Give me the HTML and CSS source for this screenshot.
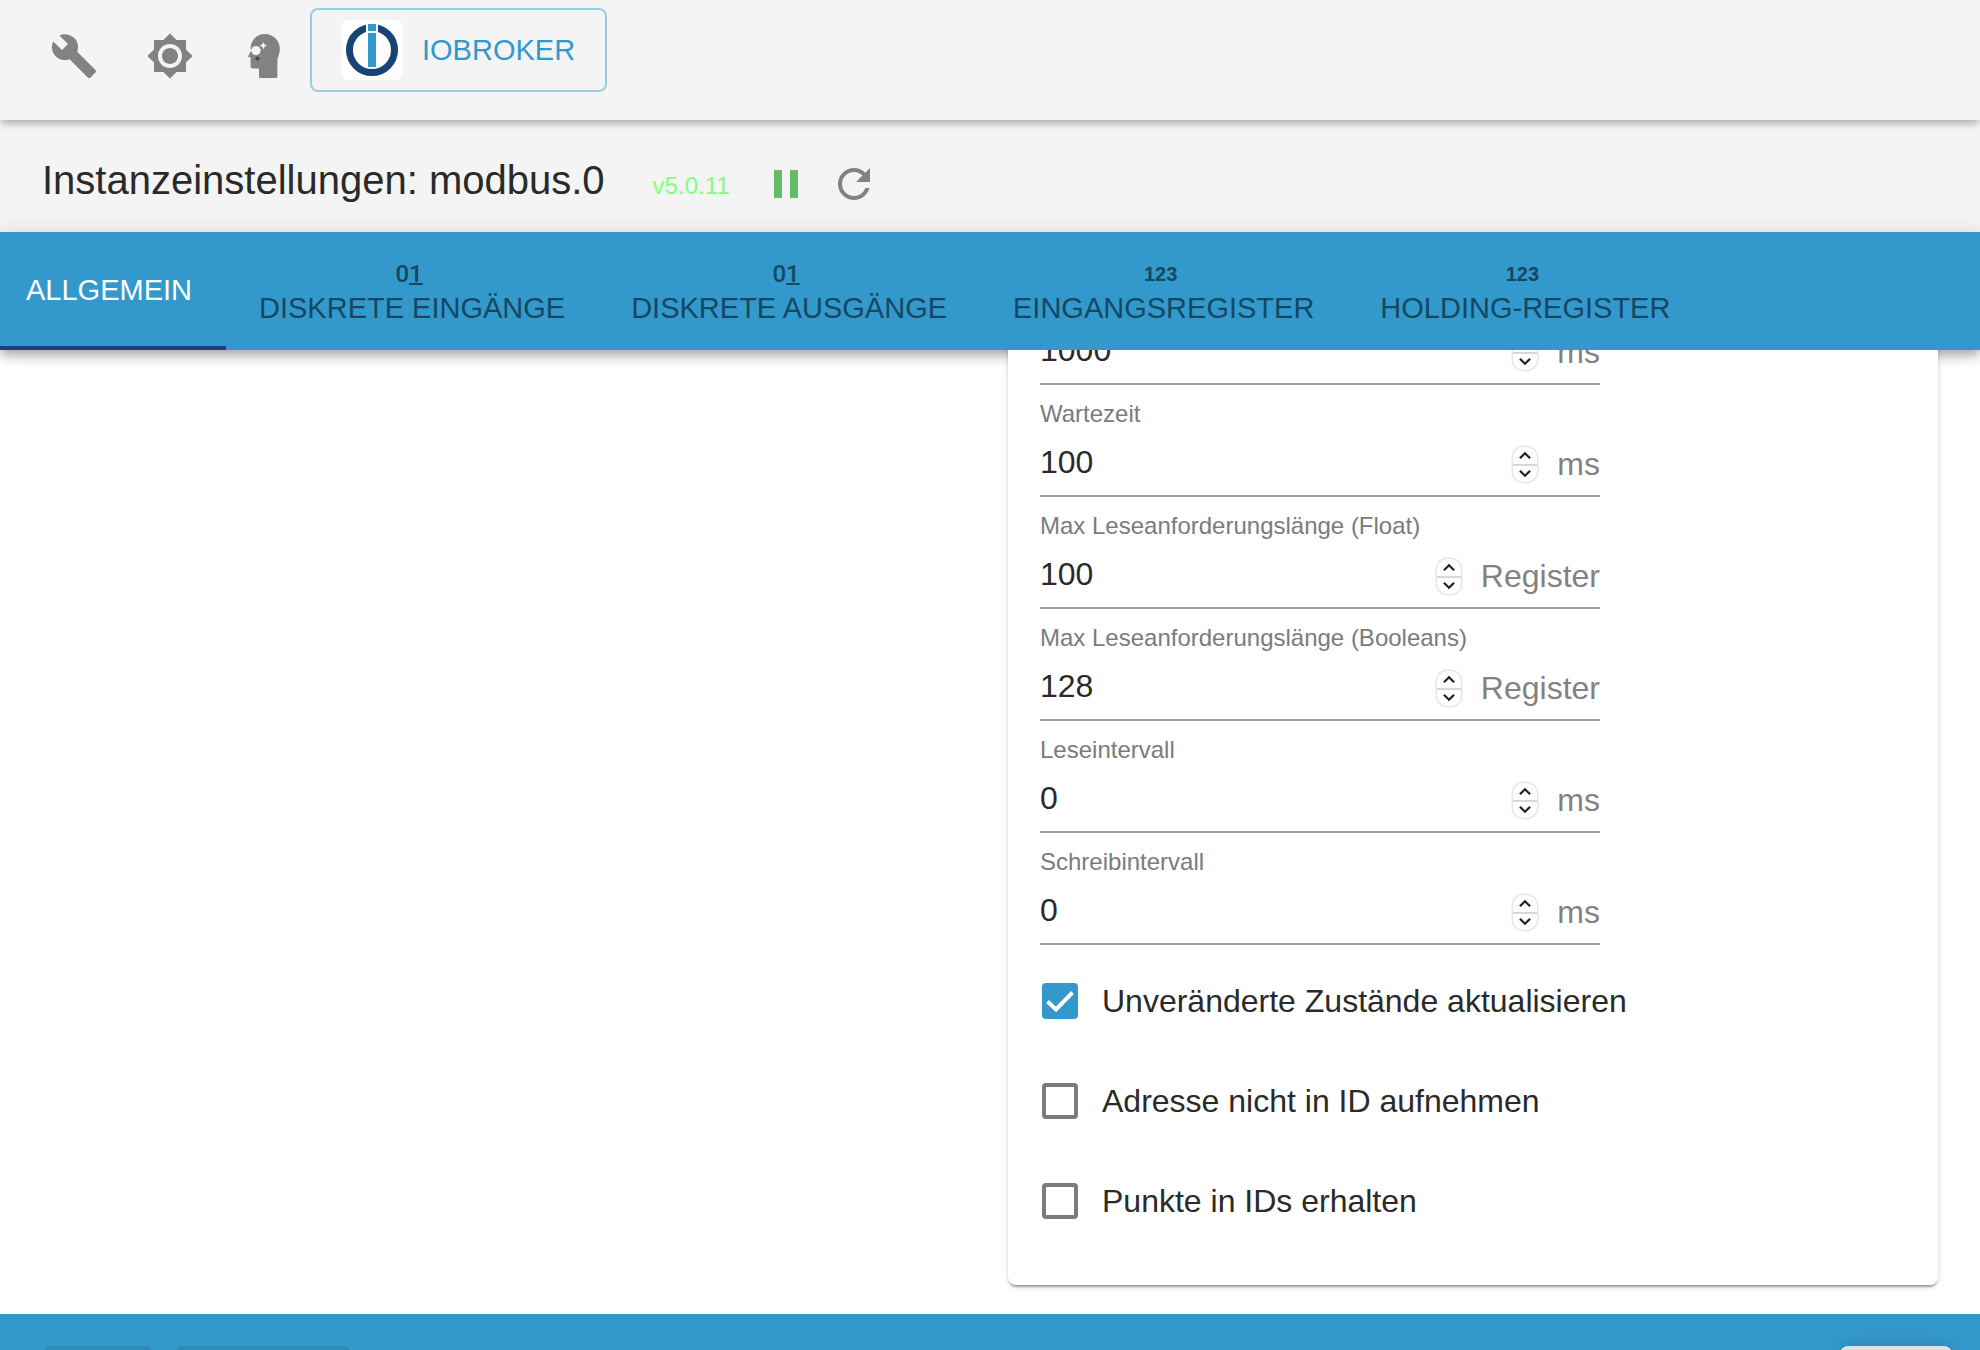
FILE: index.html
```html
<!DOCTYPE html>
<html lang="de">
<head>
<meta charset="utf-8">
<meta name="viewport" content="width=device-width, initial-scale=1">
<title>Instanzeinstellungen: modbus.0</title>
<link rel="stylesheet" href="styles.css">
</head>
<body>
<svg class="sprites" aria-hidden="true">
  <symbol id="up" viewBox="0 0 12 8"><path d="M1.500 6.500L6 2l4.500 4.500"/></symbol>
  <symbol id="down" viewBox="0 0 12 8"><path d="M1.500 1.500L6 6l4.500-4.500"/></symbol>
</svg>
<header class="appbar">
  <div class="tools">
    <button class="icon-button" aria-label="Einstellungen"><svg class="icon" viewBox="0 0 24 24"><path d="M22.700 19l-9.100-9.100c.9-2.300.4-5-1.500-6.900-2-2-5-2.400-7.400-1.300L9 6 6 9 1.600 4.700C.4 7.100.9 10.100 2.900 12.100c1.900 1.900 4.600 2.400 6.900 1.500l9.100 9.100c.4.4 1 .4 1.400 0l2.300-2.300c.5-.4.5-1.100.1-1.400z"/></svg></button>
    <button class="icon-button" aria-label="Farbschema"><svg class="icon" viewBox="0 0 24 24"><path d="M20 8.690V4h-4.690L12 .69 8.690 4H4v4.690L.69 12 4 15.310V20h4.690L12 23.310 15.310 20H20v-4.690L23.310 12 20 8.690zM12 18c-3.310 0-6-2.690-6-6s2.690-6 6-6 6 2.690 6 6-2.690 6-6 6zm0-10c-2.210 0-4 1.790-4 4s1.790 4 4 4 4-1.790 4-4-1.790-4-4-4z"/></svg></button>
    <button class="icon-button" aria-label="Expertenmodus"><svg class="icon" viewBox="0 0 24 24"><path d="M11.500 1C7.500 1 4.400 4 4.300 8v1.700L3.100 12.100c-.1.300.1.500.4.500h.8v4.700c0 .6.400.9.900.9h3.300v4c0 .5.300.8.800.8H17c.4 0 .7-.3.700-.7V13.500c.7-1.500 1.200-3.200 1.200-5.200C18.900 4.200 15.600 1 11.500 1z"/><circle cx="7" cy="9.300" r="2.300" fill="#f4f4f4"/><path d="M3.500 9.200h2" stroke="#f4f4f4"/><path d="M10.700 5.300l.4 1.100 1.100.4-1.100.4-.4 1.100-.4-1.100-1.100-.4 1.100-.4z" fill="#fff" stroke="#fff" stroke-width=".3"/><circle cx="7.700" cy="13.200" r="1" fill="#444"/></svg></button>
  </div>
  <button class="host-button">
    <svg class="logo" viewBox="0 0 60 60" aria-hidden="true"><rect width="60" height="60" rx="6" fill="#fff"/><circle cx="30" cy="30" r="22.500" fill="none" stroke="#174475" stroke-width="7"/><path d="M24 3h12v12H24zM25 40h10v7H25z" fill="#fff"/><path d="M26 4h8v7h-8zM26 13h8v34h-8z" fill="#3399cc"/></svg>
    <span>IOBROKER</span>
  </button>
</header>
<main class="settings">
  <div class="titlebar">
    <h1 class="title">Instanzeinstellungen: modbus.0</h1>
    <span class="version">v5.0.11</span>
    <button class="icon-button pause" aria-label="Pause"><svg class="icon" viewBox="0 0 24 24"><path d="M6 19h4V5H6zM14 5v14h4V5z"/></svg></button>
    <button class="icon-button" aria-label="Neu starten"><svg class="icon" viewBox="0 0 24 24"><path d="M17.650 6.350C16.200 4.900 14.210 4 12 4c-4.420 0-7.990 3.580-7.990 8s3.570 8 7.990 8c3.730 0 6.840-2.550 7.730-6h-2.080c-.82 2.330-3.040 4-5.650 4-3.310 0-6-2.690-6-6s2.690-6 6-6c1.660 0 3.140.69 4.220 1.780L13 11h7V4l-2.350 2.350z"/></svg></button>
  </div>
  <nav class="tabs" role="tablist">
    <button class="tab tab-active" role="tab" aria-selected="true">ALLGEMEIN</button>
    <button class="tab" role="tab"><span class="digits">0<u>1</u></span>DISKRETE EINGÄNGE</button>
    <button class="tab" role="tab"><span class="digits">0<u>1</u></span>DISKRETE AUSGÄNGE</button>
    <button class="tab" role="tab"><span class="digits digits-bold">123</span>EINGANGSREGISTER</button>
    <button class="tab" role="tab"><span class="digits digits-bold">123</span>HOLDING-REGISTER</button>
  </nav>
  <div class="content">
    <form class="card">
      <div class="field">
        <label class="label" for="timeout">Timeout</label>
        <div class="control"><input class="value" id="timeout" type="number" value="1000"><span class="spinner"><button type="button" aria-label="Erhöhen"><svg class="arrow"><use href="#up"/></svg></button><button type="button" aria-label="Verringern"><svg class="arrow"><use href="#down"/></svg></button></span><span class="unit">ms</span></div>
      </div>
      <div class="field">
        <label class="label" for="wait">Wartezeit</label>
        <div class="control"><input class="value" id="wait" type="number" value="100"><span class="spinner"><button type="button" aria-label="Erhöhen"><svg class="arrow"><use href="#up"/></svg></button><button type="button" aria-label="Verringern"><svg class="arrow"><use href="#down"/></svg></button></span><span class="unit">ms</span></div>
      </div>
      <div class="field">
        <label class="label" for="floats">Max Leseanforderungslänge (Float)</label>
        <div class="control"><input class="value" id="floats" type="number" value="100"><span class="spinner"><button type="button" aria-label="Erhöhen"><svg class="arrow"><use href="#up"/></svg></button><button type="button" aria-label="Verringern"><svg class="arrow"><use href="#down"/></svg></button></span><span class="unit">Register</span></div>
      </div>
      <div class="field">
        <label class="label" for="bools">Max Leseanforderungslänge (Booleans)</label>
        <div class="control"><input class="value" id="bools" type="number" value="128"><span class="spinner"><button type="button" aria-label="Erhöhen"><svg class="arrow"><use href="#up"/></svg></button><button type="button" aria-label="Verringern"><svg class="arrow"><use href="#down"/></svg></button></span><span class="unit">Register</span></div>
      </div>
      <div class="field">
        <label class="label" for="read">Leseintervall</label>
        <div class="control"><input class="value" id="read" type="number" value="0"><span class="spinner"><button type="button" aria-label="Erhöhen"><svg class="arrow"><use href="#up"/></svg></button><button type="button" aria-label="Verringern"><svg class="arrow"><use href="#down"/></svg></button></span><span class="unit">ms</span></div>
      </div>
      <div class="field">
        <label class="label" for="write">Schreibintervall</label>
        <div class="control"><input class="value" id="write" type="number" value="0"><span class="spinner"><button type="button" aria-label="Erhöhen"><svg class="arrow"><use href="#up"/></svg></button><button type="button" aria-label="Verringern"><svg class="arrow"><use href="#down"/></svg></button></span><span class="unit">ms</span></div>
      </div>
      <div class="checks">
        <label class="check"><input class="box" type="checkbox" checked>Unveränderte Zustände aktualisieren</label>
        <label class="check"><input class="box" type="checkbox">Adresse nicht in ID aufnehmen</label>
        <label class="check"><input class="box" type="checkbox">Punkte in IDs erhalten</label>
      </div>
    </form>
  </div>
  <footer class="actions">
    <button class="action save" aria-label="Speichern" disabled></button>
    <button class="action save-close" aria-label="Speichern und schließen" disabled></button>
    <button class="action close" aria-label="Schließen"></button>
  </footer>
</main>
</body>
</html>
```
FILE: styles.css
```css
* {
  box-sizing: border-box;
}

body {
  display: flex;
  flex-direction: column;
  height: 100vh;
  margin: 0;
  overflow: hidden;
  background: #fff;
  color: #2a2a2a;
  font-family: "Liberation Sans", Arial, sans-serif;
  font-size: 32px;
}

button {
  margin: 0;
  padding: 0;
  border: 0;
  background: none;
  color: inherit;
  font: inherit;
}

.sprites {
  display: none;
}

.appbar {
  display: flex;
  flex: none;
  align-items: flex-start;
  gap: 20px;
  min-height: 120px;
  padding: 8px 50px;
  background: #f4f4f4;
  box-shadow: 0 4px 8px -2px rgba(0, 0, 0, .2), 0 4px 8px rgba(0, 0, 0, .14);
  z-index: 2;
}

.tools {
  display: flex;
  gap: 48px;
  padding-top: 24px;
}

.icon-button {
  display: flex;
  color: #828282;
}

.icon {
  width: 48px;
  height: 48px;
  fill: currentColor;
}

.host-button {
  display: flex;
  align-items: center;
  gap: 20px;
  height: 84px;
  padding: 0 30px;
  border: 2px solid #9acbe5;
  border-radius: 8px;
  color: #3399cc;
  font-size: 29px;
}

.logo {
  width: 60px;
  height: 60px;
}

.settings {
  display: flex;
  flex: 1;
  flex-direction: column;
  min-height: 0;
}

.titlebar {
  display: flex;
  flex: none;
  align-items: center;
  height: 112px;
  padding: 16px 42px 0;
  background: #f4f4f4;
}

.title {
  margin: 0 48px 8px 0;
  font-size: 40px;
  font-weight: 400;
}

.version {
  margin-right: 32px;
  padding-top: 4px;
  color: #80ff80;
  font-size: 24px;
}

.pause {
  margin-right: 20px;
  color: #66bb6a;
}

.tabs {
  display: flex;
  flex: none;
  height: 118px;
  background: #3399cc;
  box-shadow: 0 4px 8px -2px rgba(0, 0, 0, .2), 0 8px 10px rgba(0, 0, 0, .14), 0 2px 20px rgba(0, 0, 0, .12);
  color: #144862;
  font-size: 29px;
}

.tab {
  display: flex;
  flex-direction: column;
  align-items: center;
  justify-content: center;
  padding: 0 33px;
  line-height: 34px;
}

.tab-active {
  padding: 2px 34px 0 26px;
  border-bottom: 4px solid #174475;
  color: #fff;
}

.digits {
  padding-right: 6px;
  font-family: Roboto, sans-serif;
  font-size: 24px;
  font-weight: 500;
}

.digits u {
  text-underline-offset: 1px;
}

.digits-bold {
  font-family: "Liberation Sans", Arial, sans-serif;
  font-size: 20px;
  font-weight: 700;
}

/* The form is scrolled to its end, above the action bar. */
.content {
  display: grid;
  flex: 1;
  grid-template-columns: 1fr 1fr;
  gap: 36px;
  align-content: end;
  min-height: 0;
  padding: 0 42px 29px;
  overflow: hidden;
}

.card {
  grid-column: 2;
  padding: 0 32px 32px;
  border-radius: 8px;
  background: #fff;
  box-shadow: 0 4px 2px -2px rgba(0, 0, 0, .2), 0 2px 2px rgba(0, 0, 0, .14), 0 2px 6px rgba(0, 0, 0, .12);
}

.field {
  max-width: 560px;
  padding-top: 14px;
  border-bottom: 2px solid #a0a0a0;
}

.label {
  display: block;
  color: #7b7b7b;
  font-size: 24px;
  line-height: 30px;
}

.control {
  display: flex;
  align-items: center;
  height: 66px;
}

.value {
  flex: 1;
  min-width: 0;
  padding: 0;
  border: 0;
  outline: 0;
  background: none;
  color: inherit;
  font: inherit;
  appearance: textfield;
}

.value::-webkit-inner-spin-button {
  appearance: none;
}

.spinner {
  display: flex;
  flex-direction: column;
  width: 24px;
  margin-top: 4px;
  margin-right: 20px;
  border-radius: 10px;
  box-shadow: 0 0 3px rgba(0, 0, 0, .3);
}

.spinner button {
  display: flex;
  align-items: center;
  justify-content: center;
  height: 17px;
}

.spinner button + button {
  height: 18px;
  border-top: 2px solid #d8d8d8;
}

.arrow {
  width: 14px;
  height: 9px;
  fill: none;
  stroke: #222;
  stroke-width: 2;
}

.unit {
  padding-top: 4px;
  color: #828282;
}

.checks {
  padding-top: 6px;
  padding-bottom: 2px;
}

.check {
  display: flex;
  align-items: center;
  gap: 24px;
  height: 100px;
  padding-left: 2px;
}

.box {
  flex: none;
  width: 36px;
  height: 36px;
  margin: 0;
  border: 4px solid #7b7b7b;
  border-radius: 4px;
  appearance: none;
}

.box:checked {
  border-color: #3399cc;
  background: #3399cc url("data:image/svg+xml,%3Csvg xmlns='http://www.w3.org/2000/svg' viewBox='0 0 28 28'%3E%3Cpath d='M1.500 14.500l8.500 8L26.500 5.500' fill='none' stroke='white' stroke-width='4'/%3E%3C/svg%3E") center / 28px no-repeat;
}

.actions {
  display: flex;
  flex: none;
  gap: 22px;
  height: 36px;
  padding: 32px 28px 0 43px;
  overflow: hidden;
  background: #3399cc;
}

.action {
  flex: none;
  height: 72px;
  border-radius: 8px;
  background: #2e8ab8;
}

.save {
  width: 110px;
}

.save-close {
  width: 176px;
}

.close {
  width: 112px;
  margin-left: auto;
  background: #e0e0e0;
  box-shadow: 0 4px 24px rgba(0, 0, 0, .2);
}
```
